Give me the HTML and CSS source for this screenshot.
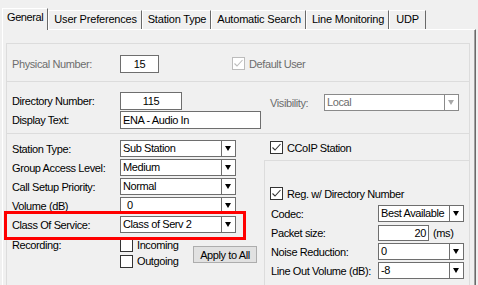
FILE: index.html
```html
<!DOCTYPE html>
<html lang="en">
  <head>
    <meta charset="UTF-8" />
    <title>Station Settings - General</title>
    <link rel="stylesheet" href="styles.css">
  </head>
  <body>
    <div class="dialog">
      <div class="tabs">
        <div class="tab active">General</div>
        <div class="tab">User Preferences</div>
        <div class="tab">Station Type</div>
        <div class="tab">Automatic Search</div>
        <div class="tab">Line Monitoring</div>
        <div class="tab">UDP</div>
      </div>

      <div class="panel">
        <div class="frame">
          <!-- physical number -->
          <div class="sect sect-phys">
            <div class="row">
              <span class="lbl dim">Physical Number:</span>
              <span class="field center w-phys">15</span>
              <span class="check dim default-user">
                <span class="box"><svg viewBox="0 0 11 11"><polyline points="1.5,5.5 4,8 9.5,2" /></svg></span>
                Default User
              </span>
            </div>
          </div>

          <!-- directory -->
          <div class="sect sect-dir">
            <div class="row">
              <span class="lbl">Directory Number:</span>
              <span class="field center w-dir">115</span>
              <span class="lbl dim vis-lbl">Visibility:</span>
              <span class="combo disabled w-vis"><span class="val">Local</span><span class="arrow"></span></span>
            </div>
            <div class="row">
              <span class="lbl">Display Text:</span>
              <span class="field w-text">ENA - Audio In</span>
            </div>
          </div>

          <!-- station settings -->
          <div class="sect sect-main">
            <div class="col-left">
              <div class="row">
                <span class="lbl">Station Type:</span>
                <span class="combo w-left"><span class="val">Sub Station</span><span class="arrow"></span></span>
              </div>
              <div class="row">
                <span class="lbl">Group Access Level:</span>
                <span class="combo w-left"><span class="val">Medium</span><span class="arrow"></span></span>
              </div>
              <div class="row">
                <span class="lbl">Call Setup Priority:</span>
                <span class="combo w-left"><span class="val">Normal</span><span class="arrow"></span></span>
              </div>
              <div class="row">
                <span class="lbl">Volume (dB)</span>
                <span class="combo w-left"><span class="val indent">0</span><span class="arrow"></span></span>
              </div>
              <div class="row flag">
                <span class="lbl">Class Of Service:</span>
                <span class="combo w-left"><span class="val">Class of Serv 2</span><span class="arrow"></span></span>
              </div>

              <div class="rec">
                <span class="lbl rec-lbl">Recording:</span>
                <div class="rec-opts">
                  <span class="check"><span class="box"></span>Incoming</span>
                  <span class="check"><span class="box"></span>Outgoing</span>
                </div>
                <button class="btn-apply">Apply to All</button>
              </div>
            </div>

            <div class="col-right">
              <span class="check ccoip">
                <span class="box"><svg viewBox="0 0 11 11"><polyline points="1.5,5.5 4,8 9.5,2" /></svg></span>
                CCoIP Station
              </span>

              <div class="subgroup">
                <span class="check reg">
                  <span class="box"><svg viewBox="0 0 11 11"><polyline points="1.5,5.5 4,8 9.5,2" /></svg></span>
                  Reg. w/ Directory Number
                </span>
                <div class="sub-rows">
                  <div class="row">
                    <span class="lbl lbl-r">Codec:</span>
                    <span class="combo w-codec"><span class="val">Best Available</span><span class="arrow"></span></span>
                  </div>
                  <div class="row">
                    <span class="lbl lbl-r">Packet size:</span>
                    <span class="field right w-packet">20</span>
                    <span class="unit">(ms)</span>
                  </div>
                  <div class="row">
                    <span class="lbl lbl-r">Noise Reduction:</span>
                    <span class="combo w-codec"><span class="val">0</span><span class="arrow"></span></span>
                  </div>
                  <div class="row">
                    <span class="lbl lbl-r">Line Out Volume (dB):</span>
                    <span class="combo w-codec"><span class="val">-8</span><span class="arrow"></span></span>
                  </div>
                </div>
              </div>
            </div>
          </div>
        </div>
      </div>
    </div>
  </body>
</html>
```

FILE: styles.css
```css
body {
  margin: 0;
  background-color: #f0f0f0;
  font-family: 'Liberation Sans', Arial, sans-serif;
  font-size: 11px;
  letter-spacing: -0.4px;
  color: #000;
}
.dialog {
  width: 478px;
  height: 285px;
  overflow: hidden;
}

/* tabs */
.tabs {
  display: flex;
  align-items: flex-end;
  height: 21px;
  margin-top: 8px;
  padding-left: 2px;
}
.tab {
  height: 18px;
  line-height: 17px;
  padding: 0 4px 0 5px;
  border-top: 1px solid #fff;
  border-left: 1px solid #fff;
  border-right: 1px solid #696969;
  background-color: #f0f0f0;
  letter-spacing: -0.2px;
  white-space: nowrap;
}
.tab:last-child {
  padding: 0 6px;
}
.tab.active {
  position: relative;
  z-index: 1;
  height: 21px;
  line-height: 16px;
  padding: 0 4px;
  margin-bottom: -1px;
  letter-spacing: -0.4px;
}

.panel {
  margin-left: 2px;
  width: 472px;
  height: 260px;
  border-top: 1px solid #fff;
  border-left: 1px solid #fff;
  border-right: 1px solid #696969;
  box-shadow: inset -1px 0 0 #a0a0a0;
  padding-top: 13px;
}
.frame {
  margin-left: 3px;
  width: 462px;
  border: 1px solid #dcdcdc;
  border-bottom: none;
}
.sect {
  padding-left: 5px;
}
.sect + .sect {
  border-top: 1px solid #dcdcdc;
}
.sect-phys {
  padding-top: 11px;
  padding-bottom: 9px;
}
.sect-dir {
  display: flex;
  flex-direction: column;
  gap: 1px;
  padding-top: 10px;
  padding-bottom: 4px;
}
.sect-dir .row {
  height: 18px;
}
.sect-main {
  display: flex;
  height: 160px;
}

.row {
  display: flex;
  align-items: center;
  height: 17px;
  white-space: nowrap;
}
.lbl {
  width: 108px;
  flex-shrink: 0;
}
.dim {
  color: #6d6d6d;
}

.field {
  box-sizing: border-box;
  height: 18px;
  line-height: 16px;
  padding: 0 2px;
  background-color: #fff;
  border: 1px solid #6e6e6e;
  overflow: hidden;
}
.field.center {
  text-align: center;
}
.field.right {
  text-align: right;
  height: 16px;
  line-height: 14px;
}
.w-phys { width: 39px; }
.w-dir { width: 62px; }
.w-text { width: 141px; }
.w-packet { width: 51px; }
.unit {
  margin-left: 4px;
}

.combo {
  box-sizing: border-box;
  display: flex;
  height: 17px;
  background-color: #fff;
  border: 1px solid #6e6e6e;
}
.combo .val {
  flex: 1;
  overflow: hidden;
  padding-left: 2px;
  line-height: 15px;
}
.combo .val.indent {
  padding-left: 6px;
}
.combo .arrow {
  position: relative;
  width: 13px;
  border-left: 1px solid #6e6e6e;
}
.combo .arrow::after {
  content: '';
  position: absolute;
  left: 3px;
  top: 5px;
  border-top: 5px solid #000;
  border-left: 3.5px solid transparent;
  border-right: 3.5px solid transparent;
}
.combo.disabled {
  border-color: #8a8a8a;
  color: #6d6d6d;
}
.combo.disabled .arrow {
  border-left-color: #8a8a8a;
}
.combo.disabled .arrow::after {
  border-top-color: #a8a8a8;
}
.w-left { width: 116px; }
.w-vis { width: 135px; height: 17px; }
.w-codec { width: 86px; }

.vis-lbl {
  width: 54px;
  margin-left: 88px;
  margin-top: 3px;
}
.sect-dir .combo {
  margin-top: 3px;
}

/* checkboxes */
.check {
  display: flex;
  align-items: center;
  gap: 4px;
  height: 16px;
  white-space: nowrap;
}
.box {
  box-sizing: border-box;
  width: 13px;
  height: 13px;
  border: 1px solid #333;
  background-color: #fff;
}
.box svg {
  display: block;
  width: 11px;
  height: 11px;
  fill: none;
  stroke: #333;
  stroke-width: 1.1;
}
.dim .box {
  border-color: #bcbcbc;
}
.dim .box svg {
  stroke: #bcbcbc;
}
.default-user {
  margin-left: 73px;
}

/* left column */
.col-left {
  display: flex;
  flex-direction: column;
  gap: 2px;
  width: 252px;
  padding-top: 6px;
}
.flag {
  position: relative;
  width: 224px;
}
.flag::after {
  content: '';
  position: absolute;
  left: -8px;
  right: -10px;
  top: -5px;
  bottom: -7px;
  border: 3px solid #f00;
}
.rec {
  display: flex;
  margin-top: 2px;
}
.rec-lbl {
  line-height: 16px;
}
.rec-opts {
  display: flex;
  flex-direction: column;
  width: 73px;
}
.btn-apply {
  align-self: flex-start;
  margin-top: 9px;
  height: 17px;
  width: 64px;
  padding: 0;
  background-color: #e1e1e1;
  border: 1px solid #adadad;
  font: inherit;
  letter-spacing: inherit;
  color: #000;
}

/* right column */
.col-right {
  flex: 1;
  padding-top: 7px;
}
.ccoip {
  height: 13px;
  margin-left: 6px;
}
.subgroup {
  margin-top: 6px;
  padding: 26px 0 0 6px;
  border-top: 1px solid #dcdcdc;
  border-left: 1px solid #dcdcdc;
  height: 140px;
}
.reg {
  height: 13px;
  margin-left: -1px;
}
.sub-rows {
  display: flex;
  flex-direction: column;
  gap: 2px;
  margin-top: 5px;
}
.lbl-r {
  width: 107px;
}
```
